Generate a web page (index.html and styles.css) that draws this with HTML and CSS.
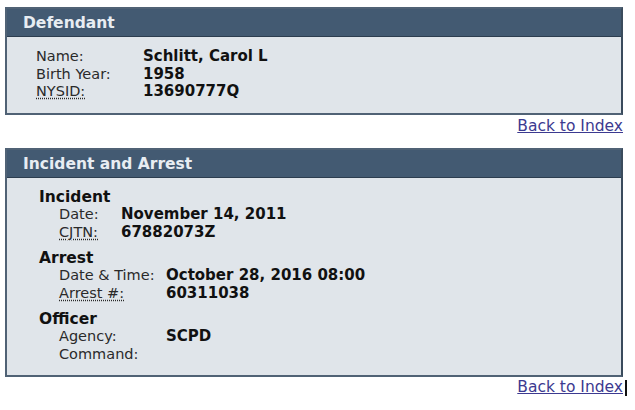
FILE: index.html
```html
<!DOCTYPE html>
<html>
<head>
<meta charset="utf-8">
<link rel="stylesheet" href="styles.css">
</head>
<body>
<div class="page">
  <section class="panel">
    <div class="panel-head">Defendant</div>
    <div class="panel-body body-def">
      <div class="rows rows-wide">
        <span class="label">Name:</span><span class="value">Schlitt, Carol L</span>
        <span class="label">Birth Year:</span><span class="value">1958</span>
        <span class="label"><abbr>NYSID:</abbr></span><span class="value">13690777Q</span>
      </div>
    </div>
  </section>
  <div class="link-row first"><a href="#" class="back">Back to Index</a></div>

  <section class="panel">
    <div class="panel-head">Incident and Arrest</div>
    <div class="panel-body body-inc">
      <div class="group">
        <div class="group-title">Incident</div>
        <div class="rows rows-narrow">
          <span class="label">Date:</span><span class="value">November 14, 2011</span>
          <span class="label"><abbr>CJTN:</abbr></span><span class="value">67882073Z</span>
        </div>
      </div>
      <div class="group">
        <div class="group-title">Arrest</div>
        <div class="rows rows-wide">
          <span class="label">Date &amp; Time:</span><span class="value">October 28, 2016 08:00</span>
          <span class="label"><abbr>Arrest #:</abbr></span><span class="value">60311038</span>
        </div>
      </div>
      <div class="group">
        <div class="group-title">Officer</div>
        <div class="rows rows-wide">
          <span class="label">Agency:</span><span class="value">SCPD</span>
          <span class="label">Command:</span><span class="value"></span>
        </div>
      </div>
    </div>
  </section>
  <div class="link-row second"><a href="#" class="back">Back to Index</a><span class="caret"></span></div>
</div>
</body>
</html>
```

FILE: styles.css
```css
html, body {
  margin: 0;
  padding: 0;
  background: #ffffff;
}
body {
  font-family: "DejaVu Sans", Verdana, sans-serif;
  color: #1a1a1a;
}
.page {
  width: 618px;
  padding: 7px 0 0 5px;
}
.panel {
  border: 2px solid #506275;
  border-right-color: #3a4b5c;
  background: #e0e5ea;
}
.panel-head {
  background: #435a72;
  color: #e8edf2;
  font-weight: bold;
  font-size: 15.5px;
  line-height: 26px;
  padding: 1px 0 0 16px;
  border-bottom: 1px solid #2c3d4f;
}
.panel-body {
  padding-left: 29px;
}
.body-def {
  padding-top: 11px;
  padding-bottom: 12.5px;
}
.body-inc {
  padding-top: 10px;
  padding-bottom: 12px;
  padding-left: 32px;
}
.rows {
  display: grid;
  line-height: 17.5px;
}
.rows-wide {
  grid-template-columns: 107px auto;
}
.rows-narrow {
  grid-template-columns: 62px auto;
}
.label {
  font-size: 14.5px;
  color: #2a2a2a;
}
.value {
  font-size: 15px;
  font-weight: bold;
  color: #111;
}
abbr {
  text-decoration: underline dotted;
  text-underline-offset: 2px;
}
.group + .group {
  margin-top: 8px;
}
.group-title {
  font-size: 15.5px;
  font-weight: bold;
  line-height: 18px;
  color: #111;
}
.group .rows {
  padding-left: 20px;
}
.link-row {
  position: relative;
  text-align: right;
  line-height: 18px;
}
.link-row.first {
  margin-top: 2px;
  margin-bottom: 13px;
}
.link-row.second {
  margin-top: 1px;
}
.back {
  font-size: 15.5px;
  color: #3c3a90;
  text-decoration: underline;
}
.caret {
  position: absolute;
  right: -4px;
  top: 2px;
  width: 2px;
  height: 18px;
  background: #111;
}
```
